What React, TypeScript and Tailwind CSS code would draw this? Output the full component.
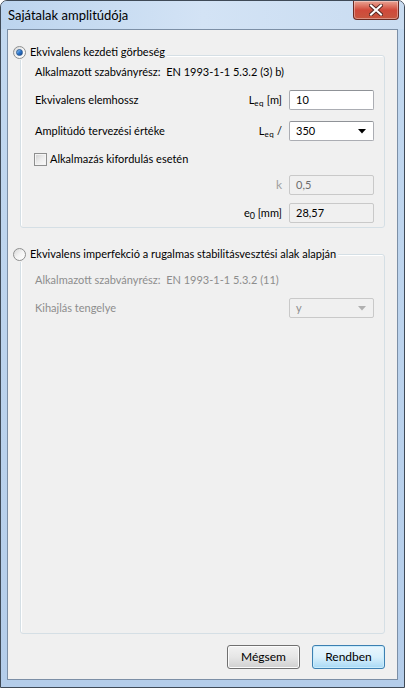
import React from 'react'

function Radio({ checked }: { checked?: boolean }) {
  return (
    <span className="relative flex h-[13px] w-[13px] shrink-0 items-center justify-center rounded-full border border-[#8e8f8f] bg-gradient-to-br from-[#d6d6d6] via-[#f4f4f4] to-[#ffffff]">
      {checked && (
        <span className="h-[7px] w-[7px] rounded-full border border-[#2a5a93] bg-gradient-to-br from-[#9fd1f7] via-[#2f7ad0] to-[#16418a]" />
      )}
    </span>
  )
}

function Sub({ children }: { children: React.ReactNode }) {
  return (
    <span>
      L<span className="relative top-[2px] text-[8px] tracking-[0.5px]">{children}</span>
    </span>
  )
}

function TextBox({ value, disabled }: { value: string; disabled?: boolean }) {
  return (
    <div
      className={
        'flex h-[20px] w-[85px] items-center rounded-[2px] border pl-[6px] ' +
        (disabled
          ? 'border-[#c9c9c9] bg-[#f0f0f0] text-[#6d6d6d]'
          : 'border-[#abadb3] border-t-[#8f9297] bg-white text-black')
      }
    >
      {value}
    </div>
  )
}

function Combo({ value, disabled }: { value: string; disabled?: boolean }) {
  return (
    <div
      className={
        'flex h-[20px] w-[85px] items-center justify-between rounded-[2px] border pl-[6px] pr-[7px] ' +
        (disabled
          ? 'border-[#c9c9c9] bg-[#f0f0f0] text-[#8d8d8d]'
          : 'border-[#abadb3] border-t-[#8f9297] bg-white text-black')
      }
    >
      <span>{value}</span>
      <svg width="8" height="5" viewBox="0 0 8 5">
        <path d="M0 0h8L4 4.5z" fill={disabled ? '#b0b0b0' : '#000'} />
      </svg>
    </div>
  )
}

function Row({ label, right, field, dim }: { label?: string; right: React.ReactNode; field: React.ReactNode; dim?: boolean }) {
  return (
    <div className={'flex h-[20px] items-center justify-between ' + (dim ? 'text-[#8d8d8d]' : '')}>
      <span>{label}</span>
      <div className="flex items-center gap-[7px]">
        <span>{right}</span>
        {field}
      </div>
    </div>
  )
}

function Legend({ checked, text }: { checked?: boolean; text: string }) {
  return (
    <div className="relative z-10 ml-[5px] flex h-[16px] items-center gap-[4px] self-start bg-[#f0f0f0] pr-[2px]">
      <Radio checked={checked} />
      <span>{text}</span>
    </div>
  )
}

export default function App() {
  return (
    <div className="flex h-[688px] w-[405px] flex-col overflow-hidden rounded-t-[7px] border border-[#3f4a57] bg-gradient-to-b from-[#c3d9f0] to-[#b4cdea] font-['Lato',sans-serif] text-[11px] text-black">
      {/* title bar */}
      <div className="flex h-[28px] shrink-0 items-start justify-between bg-gradient-to-r from-[#bcd4ee] via-[#d3e3f5] to-[#c9dcf1]">
        <span className="ml-[7px] mt-[5px] text-[13px] text-black">Sajátalak amplitúdója</span>
        <div className="mr-[5px] flex h-[19px] w-[46px] items-center justify-center rounded-b-[4px] border border-t-0 border-[#6b2a22] bg-gradient-to-b from-[#e8a394] via-[#d0493a] to-[#c7563f] shadow-[inset_0_0_0_1px_rgba(255,255,255,0.35)]">
          <svg width="14" height="12" viewBox="0 0 14 12">
            <path d="M2 1.5l10 9M12 1.5l-10 9" stroke="#5a2a24" strokeWidth="4" strokeLinecap="square" />
            <path d="M2 1.5l10 9M12 1.5l-10 9" stroke="#fff" strokeWidth="2" strokeLinecap="square" />
          </svg>
        </div>
      </div>

      {/* client area */}
      <div className="mx-[6px] mb-[7px] flex flex-1 flex-col border border-[#7c8fa6] bg-[#f0f0f0] pb-[10px]">
        <div className="flex flex-col pt-[14px]">
          <Legend checked text="Ekvivalens kezdeti görbeség" />
          <div className="mx-[12px] -mt-[5px] flex flex-col rounded-[3px] border border-[#d5dfe5] pb-[4px] pl-[14px] pr-[10px] pt-[8px] shadow-[inset_1px_1px_0_#fff]">
            <div className="flex h-[16px] items-center">Alkalmazott szabványrész:&nbsp; EN 1993-1-1 5.3.2 (3) b)</div>
            <div className="mt-[10px]">
              <Row label="Ekvivalens elemhossz" right={<><Sub>eq</Sub> [m]</>} field={<TextBox value="10" />} />
            </div>
            <div className="mt-[11px]">
              <Row label="Amplitúdó tervezési értéke" right={<><Sub>eq</Sub> /</>} field={<Combo value="350" />} />
            </div>
            <div className="-ml-[1px] mt-[10px] flex h-[16px] items-center gap-[3px]">
              <span className="h-[13px] w-[13px] border border-[#8e8f8f] bg-gradient-to-br from-[#cfcfcf] via-[#ececec] to-[#fbfbfb] shadow-[inset_0_0_0_1px_#f4f4f4]" />
              <span>Alkalmazás kifordulás esetén</span>
            </div>
            <div className="mt-[8px]">
              <Row right={<span className="text-[12px] text-[#a0a0a0]">k</span>} field={<TextBox value="0,5" disabled />} />
            </div>
            <div className="mt-[8px]">
              <Row
                right={
                  <>
                    e<span className="relative top-[2px] text-[9px]">0</span> [mm]
                  </>
                }
                field={<div className="flex h-[20px] w-[85px] items-center rounded-[2px] border border-[#c9c9c9] bg-[#f0f0f0] pl-[6px]">28,57</div>}
              />
            </div>
          </div>
        </div>

        <div className="mt-[18px] flex flex-1 flex-col">
          <Legend text="Ekvivalens imperfekció a rugalmas stabilitásvesztési alak alapján" />
          <div className="mx-[12px] -mt-[8px] flex flex-1 flex-col rounded-[3px] border border-[#d5dfe5] pl-[14px] pr-[10px] pt-[17px] text-[#8d8d8d] shadow-[inset_1px_1px_0_#fff]">
            <div className="flex h-[16px] items-center">Alkalmazott szabványrész:&nbsp; EN 1993-1-1 5.3.2 (11)</div>
            <div className="mt-[10px]">
              <Row dim label="Kihajlás tengelye" right={null} field={<Combo value="y" disabled />} />
            </div>
          </div>
        </div>

        <div className="mr-[12px] mt-[11px] flex justify-end gap-[12px]">
          <button className="h-[24px] w-[73px] rounded-[3px] border border-[#707070] bg-gradient-to-b from-[#f2f2f2] via-[#e6e6e6] to-[#d0d0d0] text-[12px] shadow-[inset_0_0_0_1px_#fcfcfc]">
            Mégsem
          </button>
          <button className="h-[24px] w-[73px] rounded-[3px] border border-[#3c7fb1] bg-gradient-to-b from-[#eaf6fd] via-[#d9f0fc] to-[#a7d9f5] text-[12px] shadow-[inset_0_0_0_1px_#c9ecfc]">
            Rendben
          </button>
        </div>
      </div>
    </div>
  )
}
